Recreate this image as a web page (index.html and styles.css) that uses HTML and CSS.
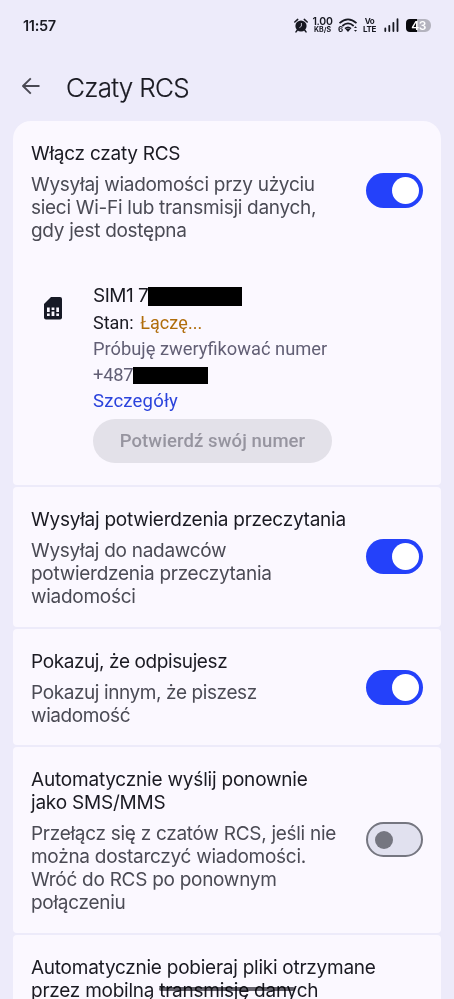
FILE: index.html
```html
<!DOCTYPE html>
<html lang="pl">
<head>
<meta charset="utf-8">
<title>Czaty RCS</title>
<link rel="stylesheet" href="styles.css">
</head>
<body>
<div class="screen">
  <header class="status">
    <span class="clock">11:57</span>
    <div class="indicators">
      <svg class="alarm" width="14" height="15" viewBox="0 0 14 15"><circle cx="7" cy="8" r="5.6" fill="#171821"/><path d="M.8 4 3.7 1.4M13.2 4l-2.9-2.600M3.200 12.300l-1.200 1.600m8.800-1.600 1.200 1.600" stroke="#171821" stroke-width="1.500" stroke-linecap="round"/><path d="M7.400 5v3.200L5.400 9.700" fill="none" stroke="#d5d3e0" stroke-width=".9"/></svg>
      <span class="stack speed"><b>1.00</b><small>KB/S</small></span>
      <svg class="wifi" width="20" height="15" viewBox="0 0 20 15"><path d="M1.500 5.200Q10-2.600 18.500 5.200M4.300 8Q10 2.800 15.700 8M7 10.600Q10 8 13 10.600" fill="none" stroke="#171821" stroke-width="1.700"/><path d="m7.600 11.300 2.400 2.800 2.400-2.800q-2.400-1.600-4.800 0Z" fill="#171821"/><path d="m16 10 1.500-1.700L19 10Zm0 2 1.500 1.700L19 12Z" fill="#171821"/><text x="0" y="14" class="wifi-gen">6</text></svg>
      <span class="stack volte"><b>Vo</b><b>LTE</b></span>
      <svg class="signal" width="15" height="14" viewBox="0 0 15 14"><path d="M1.300 13v-2.500M5.300 13V7.800M9.400 13V4.800M13.500 13V1.200" stroke="#171821" stroke-width="1.800" stroke-linecap="round"/></svg>
      <span class="battery">43</span>
    </div>
  </header>
  <div class="appbar">
    <svg width="20" height="18" viewBox="0 0 20 18"><path d="M18.500 9H2M9.800 1.400 2 9l7.800 7.600" fill="none" stroke="#4a4953" stroke-width="1.900" stroke-linejoin="round"/></svg>
    <h1>Czaty RCS</h1>
  </div>
  <main class="cards">
    <section class="card card-main">
      <div class="row">
        <div class="text">
          <h2>Włącz czaty RCS</h2>
          <p>Wysyłaj wiadomości przy użyciu<br>sieci Wi-Fi lub transmisji danych,<br>gdy jest dostępna</p>
        </div>
        <span class="switch on"></span>
      </div>
      <div class="sim">
        <svg width="18" height="23" viewBox="0 0 18 23"><path d="M7 0h9q2 0 2 2v18.500q0 2-2 2H2q-2 0-2-2V7Z" fill="#171a26"/><path d="M3 10.500h2.700v4.500H3Zm0 6h2.700v2.500H3Zm4.600-6h2.800v2.500H7.600Zm0 4h2.800v4.500H7.600Zm4.700-4H15v4.500h-2.700Zm0 6H15v2.500h-2.700Z" fill="#fbf8ff"/></svg>
        <div class="sim-info">
          <div class="sim-name">SIM1 7<i class="redact wide"></i></div>
          <div class="state">Stan: <span>Łączę...</span></div>
          <div class="verify">Próbuję zweryfikować numer</div>
          <div class="verify phone">+487<i class="redact"></i></div>
          <a class="details">Szczegóły</a>
          <button class="confirm" disabled>Potwierdź swój numer</button>
        </div>
      </div>
    </section>
    <section class="card card-receipts">
      <div class="row">
        <div class="text">
          <h2>Wysyłaj potwierdzenia przeczytania</h2>
          <p>Wysyłaj do nadawców<br>potwierdzenia przeczytania<br>wiadomości</p>
        </div>
        <span class="switch on"></span>
      </div>
    </section>
    <section class="card card-typing">
      <div class="row">
        <div class="text">
          <h2>Pokazuj, że odpisujesz</h2>
          <p>Pokazuj innym, że piszesz<br>wiadomość</p>
        </div>
        <span class="switch on"></span>
      </div>
    </section>
    <section class="card card-resend">
      <div class="row">
        <div class="text">
          <h2>Automatycznie wyślij ponownie<br>jako SMS/MMS</h2>
          <p>Przełącz się z czatów RCS, jeśli nie<br>można dostarczyć wiadomości.<br>Wróć do RCS po ponownym<br>połączeniu</p>
        </div>
        <span class="switch"></span>
      </div>
    </section>
    <section class="card card-download">
      <h2>Automatycznie pobieraj pliki otrzymane<br>przez mobilną transmisję danych</h2>
    </section>
  </main>
  <div class="home-bar"></div>
</div>
</body>
</html>
```

FILE: styles.css
```css
* { box-sizing: border-box; }
body { margin: 0; background: #edebfa; font-family: Inter, "Liberation Sans", sans-serif; color: #1a1a22; }
.screen { position: relative; height: 999px; overflow: hidden; }
h1, h2, p { margin: 0; font-weight: 400; white-space: nowrap; }

.status { height: 50px; padding: 0 23px; display: flex; align-items: center; justify-content: space-between; }
.clock { font-size: 14.5px; font-weight: 600; letter-spacing: -.3px; }
.indicators { display: flex; align-items: center; height: 18px; }
.stack { display: flex; flex-direction: column; align-items: center; color: #171821; }
.speed { width: 21px; margin-left: 4px; }
.speed b { font-size: 10.5px; font-weight: 600; line-height: 9px; letter-spacing: -.3px; }
.speed small { font-size: 7px; font-weight: 700; line-height: 8px; }
.wifi { margin-left: 5px; }
.wifi-gen { font: 700 8px Inter, sans-serif; fill: #171821; }
.volte { width: 13px; margin-left: 5px; }
.volte b { font-size: 8px; font-weight: 700; line-height: 8px; letter-spacing: -.4px; }
.signal { margin-left: 8px; }
.battery { margin-left: 7px; width: 25px; height: 13px; border-radius: 4px 6px 6px 4px; background: linear-gradient(90deg, #08080c 43%, #b4b3be 43%); color: #fff; font-size: 12px; font-weight: 600; line-height: 13px; letter-spacing: -.6px; text-align: center; }

.appbar { height: 71px; padding: 1px 21px 0; display: flex; align-items: center; gap: 25px; }
.appbar h1 { font-size: 26px; line-height: 32px; font-weight: 300; letter-spacing: -.7px; padding-top: 3px; -webkit-text-stroke: .2px currentColor; }

.cards { display: flex; flex-direction: column; gap: 2px; padding: 0 13px; }
.card { background: #fbf8ff; border-radius: 4px; padding: 20.5px 18px 0; flex: none; }
.card-main { border-radius: 18px 18px 4px 4px; height: 364px; }
.card-receipts { height: 140px; }
.card-typing { height: 116px; }
.card-resend { height: 186px; }
.card-download { height: 140px; }
.row { display: flex; justify-content: space-between; align-items: center; }
.text { width: 320px; }
h2 { font-size: 19px; line-height: 23px; letter-spacing: -.25px; }
p { margin-top: 8.5px; font-size: 19px; line-height: 23px; letter-spacing: -.28px; color: #4b4b55; }
.card-typing h2, .card-typing p { letter-spacing: -.4px; }
.card-resend h2 { letter-spacing: -.2px; }

.switch { flex: none; width: 57px; height: 35px; border-radius: 18px; border: 2px solid #757680; background: #e1e1ef; display: flex; align-items: center; padding: 0 7px; margin-bottom: 2px; }
.switch::before { content: ""; width: 18px; height: 18px; border-radius: 50%; background: #757680; }
.switch.on { border: 0; background: #2441fa; justify-content: flex-end; padding: 0 4px; }
.switch.on::before { width: 27px; height: 27px; background: #fff; }

.sim { display: flex; padding: 40px 0 0 13px; gap: 31px; }
.sim > svg { margin-top: 15px; }
.sim-info { display: flex; flex-direction: column; align-items: flex-start; line-height: 26px; font-family: Roboto, sans-serif; white-space: nowrap; }
.sim-name { display: flex; align-items: center; height: 28px; font: 400 19px/28px Inter, sans-serif; letter-spacing: -.5px; }
.redact { display: block; width: 75px; height: 17px; background: #000; }
.redact.wide { width: 94px; height: 19px; }
.state { font-size: 18px; }
.state span { margin-left: 2px; letter-spacing: .1px; color: #b06d0b; }
.verify { font-size: 18.3px; color: #625f75; }
.phone { display: flex; align-items: center; letter-spacing: -.2px; }
.details { font-size: 18.5px; letter-spacing: .2px; color: #2b43dc; }
.confirm { margin-top: 5px; width: 239px; height: 44px; border: 0; border-radius: 22px; padding: 0 0 1px; background: #e3e1e9; color: #96949f; font: 500 18.5px Roboto, sans-serif; letter-spacing: .1px; }

.home-bar { position: absolute; left: 159px; top: 987px; width: 136px; height: 4px; border-radius: 2px; background: #66656d; mix-blend-mode: multiply; }
```
